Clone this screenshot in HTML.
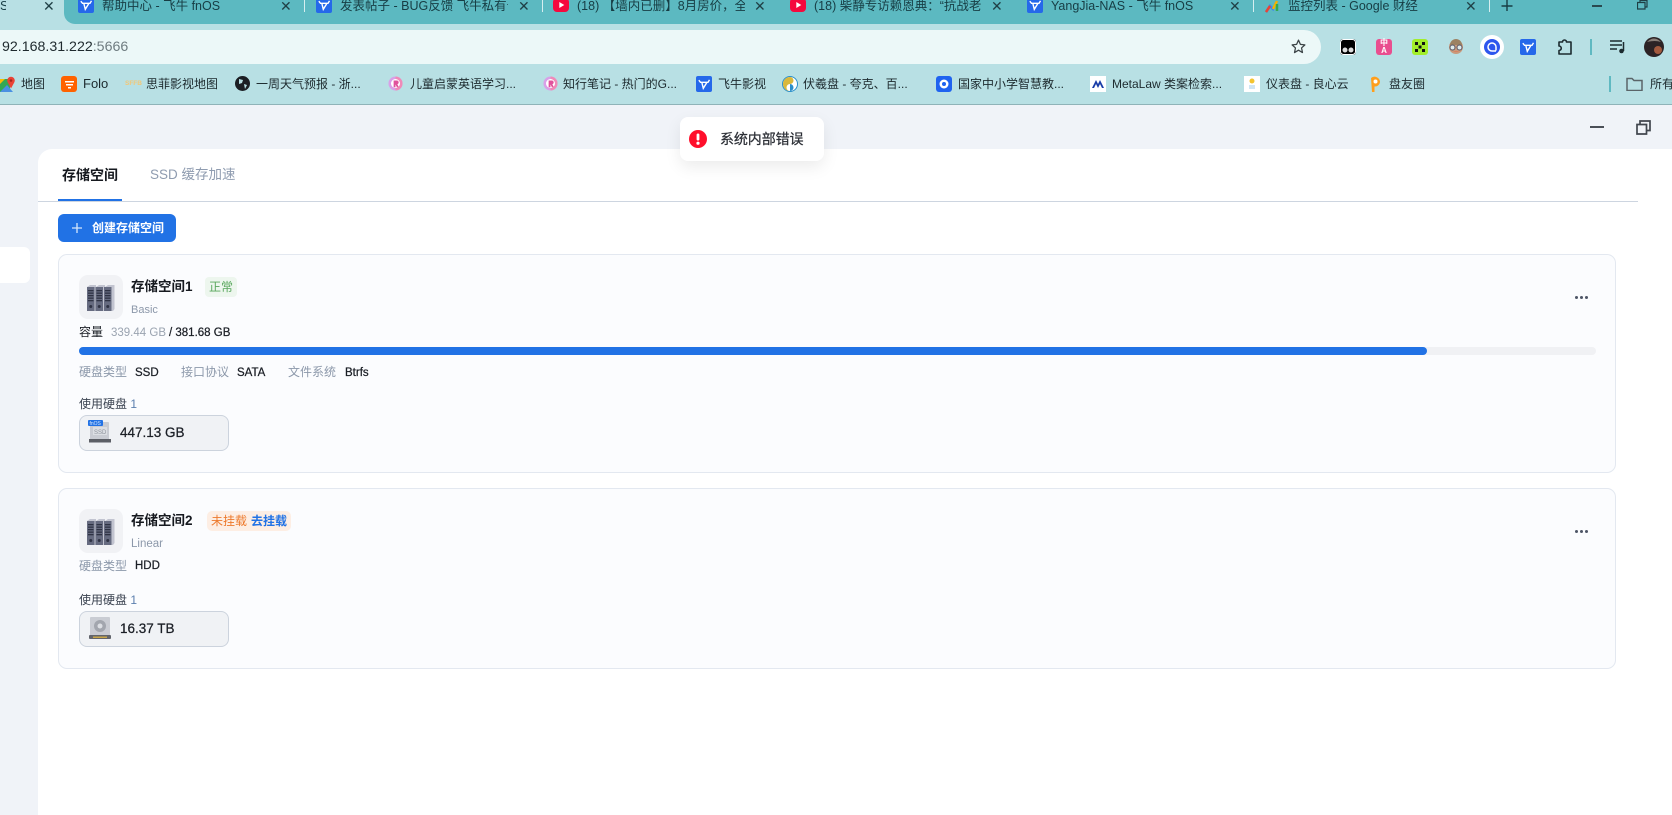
<!DOCTYPE html>
<html lang="zh">
<head>
<meta charset="utf-8">
<title>存储空间</title>
<style>
html,body{margin:0;padding:0;width:1672px;height:815px;overflow:hidden;background:#fff}
body{position:relative;font-family:"Liberation Sans","Noto Sans CJK SC",sans-serif;color:#1b1f26}
.a{position:absolute}
.t{position:absolute;white-space:nowrap;line-height:16px;height:16px}
.tab{font-size:12.5px;color:#173d44;overflow:hidden}
.bm{font-size:12px;color:#1d2a2e}
.x{position:absolute;top:0;font-size:14px;line-height:13px;color:#1f3f45;font-weight:400}
.sep{position:absolute;top:0;width:1px;height:12px;background:#d6eef0}
.g{color:#8c98aa}
.m{-webkit-text-stroke:.25px currentColor}
.card{position:absolute;left:58px;width:1556px;background:#fbfcfe;border:1px solid #e3e8f0;border-radius:9px;box-sizing:content-box}
.srv{position:absolute;left:79px;width:44px;height:44px;background:#f1f2f5;border-radius:9px}
.disk{position:absolute;left:79px;width:148px;height:34px;background:#f0f2f5;border:1px solid #ccd3dd;border-radius:8px}
.s12{font-size:12px}
</style>
</head>
<body>
<svg width="0" height="0" style="position:absolute">
<defs>
<symbol id="fn" viewBox="0 0 16 16"><rect width="16" height="16" rx="2" fill="#2568ea"/><path d="M2.800 4.200L4.500 6.300H12L13.500 3.800M5.800 6.300L7.300 12.300 11 6.300" fill="none" stroke="#fff" stroke-width="1.400"/></symbol>
<symbol id="yt" viewBox="0 0 16 16"><rect width="16" height="14" y="1" rx="4" fill="#f5093e"/><path d="M6.300 5l5 3-5 3z" fill="#fff"/></symbol>
<symbol id="rr" viewBox="0 0 16 16"><circle cx="8" cy="8" r="7.500" fill="#d9a0e8"/><path d="M8 .5a7.500 7.500 0 0 1 0 15z" fill="#f08ab8"/><circle cx="8" cy="8" r="4.800" fill="#fff"/><path d="M6 4.800h3.500a2 2 0 0 1 .5 3.900L11.500 12H9.500L8 9v3H6z" fill="#e0529c"/></symbol>
<symbol id="srv" viewBox="0 0 28 27">
<path d="M0 3L3 1H9L9 3L12 1H18L18 3L21 1H27.500V25L26 27H0z" fill="#c2c4d0"/>
<g fill="#666b80"><rect x="0" y="3" width="7.500" height="24"/><rect x="8.500" y="3" width="7.500" height="24"/><rect x="17" y="3" width="7.500" height="24"/></g>
<g fill="#2f3344"><rect x="1" y="6" width="5.500" height="1.300"/><rect x="1" y="8.500" width="5.500" height="1.300"/><rect x="1" y="11" width="5.500" height="1.300"/><rect x="1" y="13.500" width="5.500" height="1.300"/><rect x="1" y="16" width="5.500" height="1.300"/><rect x="9.500" y="6" width="5.500" height="1.300"/><rect x="9.500" y="8.500" width="5.500" height="1.300"/><rect x="9.500" y="11" width="5.500" height="1.300"/><rect x="9.500" y="13.500" width="5.500" height="1.300"/><rect x="9.500" y="16" width="5.500" height="1.300"/><rect x="18" y="6" width="5.500" height="1.300"/><rect x="18" y="8.500" width="5.500" height="1.300"/><rect x="18" y="11" width="5.500" height="1.300"/><rect x="18" y="13.500" width="5.500" height="1.300"/><rect x="18" y="16" width="5.500" height="1.300"/><circle cx="3.750" cy="22.500" r="1.500"/><circle cx="12.250" cy="22.500" r="1.500"/><circle cx="20.750" cy="22.500" r="1.500"/></g>
</symbol>
</defs>
</svg>

<!-- browser chrome -->
<div class="a" style="left:0;top:0;width:1672px;height:105px;background:#b8e0e4"></div>
<div class="a" style="left:0;top:104px;width:1672px;height:1px;background:#8fb3b8"></div>
<div class="a" style="left:64px;top:0;width:1608px;height:24px;background:#5cb9c1;border-bottom-left-radius:11px"></div>

<div class="t tab" style="left:0;top:-2px;width:6px">S</div>
<div class="x" style="left:43px">✕</div>

<svg class="a" style="left:78px;top:0" width="16" height="13"><use href="#fn" y="-3" width="16" height="16"/></svg>
<div class="t tab" style="left:102px;top:-2px;width:130px">帮助中心 - 飞牛 fnOS</div>
<div class="x" style="left:280px">✕</div>
<div class="sep" style="left:304px"></div>
<svg class="a" style="left:316px;top:0" width="16" height="13"><use href="#fn" y="-3" width="16" height="16"/></svg>
<div class="t tab" style="left:340px;top:-2px;width:168px">发表帖子 - BUG反馈 飞牛私有云</div>
<div class="x" style="left:518px">✕</div>
<div class="sep" style="left:542px"></div>
<svg class="a" style="left:553px;top:0" width="16" height="13"><use href="#yt" y="-3" width="16" height="16"/></svg>
<div class="t tab" style="left:577px;top:-2px;width:168px">(18) 【墙内已删】8月房价，全国</div>
<div class="x" style="left:754px">✕</div>
<svg class="a" style="left:790px;top:0" width="16" height="13"><use href="#yt" y="-3" width="16" height="16"/></svg>
<div class="t tab" style="left:814px;top:-2px;width:168px">(18) 柴静专访赖恩典：“抗战老兵</div>
<div class="x" style="left:991px">✕</div>
<svg class="a" style="left:1027px;top:0" width="16" height="13"><use href="#fn" y="-3" width="16" height="16"/></svg>
<div class="t tab" style="left:1051px;top:-2px;width:170px">YangJia-NAS - 飞牛 fnOS</div>
<div class="x" style="left:1229px">✕</div>
<div class="sep" style="left:1253px"></div>
<svg class="a" style="left:1265px;top:0" width="16" height="13"><path d="M1 12l4-6 3 3 4-8" stroke="#3b82f6" stroke-width="2.500" fill="none"/><path d="M8 9l4-8" stroke="#f4b400" stroke-width="2.500"/><path d="M1 12l4-6" stroke="#ea4335" stroke-width="2.500"/><path d="M12 11V4" stroke="#34a853" stroke-width="2.500"/></svg>
<div class="t tab" style="left:1288px;top:-2px;width:170px">监控列表 - Google 财经</div>
<div class="x" style="left:1465px">✕</div>
<div class="sep" style="left:1489px"></div>
<svg class="a" style="left:1501px;top:0" width="12" height="12"><path d="M6 0v11M0.500 6h11" stroke="#173d44" stroke-width="1.400"/></svg>
<div class="a" style="left:1592px;top:5px;width:10px;height:1.500px;background:#2a4a50"></div>
<svg class="a" style="left:1637px;top:0" width="11" height="10"><path d="M3 2V0.500h7V7H8.500M0.500 2.500h7.500V9H0.500z" stroke="#1f3f45" stroke-width="1.200" fill="none"/></svg>

<!-- address bar -->
<div class="a" style="left:-20px;top:30px;width:1341px;height:34px;background:#ecf8f8;border-radius:17px"></div>
<div class="t" style="left:2px;top:39px;font-size:14.200px;color:#1f2a2e">92.168.31.222<span style="color:#6f7c80">:5666</span></div>
<svg class="a" style="left:1290px;top:38px" width="17" height="17" viewBox="0 0 24 24"><path d="M12 3l2.700 6 6.300.7-4.700 4.300 1.300 6.500L12 17.200 6.400 20.500l1.300-6.500L3 9.700 9.300 9z" fill="none" stroke="#3c4447" stroke-width="1.800" stroke-linejoin="round"/></svg>

<!-- extensions -->
<svg class="a" style="left:1340px;top:39px" width="16" height="16"><rect width="16" height="16" rx="3" fill="#000"/><rect x="0.500" y="0.500" width="15" height="15" rx="3" fill="none" stroke="#fff"/><circle cx="5" cy="11" r="2.500" fill="#ddd"/><circle cx="11" cy="11" r="2.500" fill="#ddd"/></svg>
<div class="a" style="left:1376px;top:39px;width:16px;height:16px;background:#e94e8f;border-radius:3px;color:#fff;font-size:8px;line-height:8px;font-weight:700;text-align:center">中<br>A</div>
<svg class="a" style="left:1412px;top:39px" width="16" height="16"><rect width="16" height="16" rx="3" fill="#a2ee2a"/><g fill="#111"><rect x="3" y="3" width="3" height="3"/><rect x="10" y="3" width="3" height="3"/><rect x="6.500" y="6.500" width="3" height="3"/><rect x="3" y="10" width="3" height="3"/><rect x="10" y="10" width="3" height="3"/></g></svg>
<svg class="a" style="left:1448px;top:39px" width="16" height="16"><circle cx="8" cy="8" r="7" fill="#c99a7c"/><path d="M2 6a6 6 0 0 1 12 0z" fill="#9c8162"/><circle cx="4.500" cy="8.500" r="2.500" fill="#dfeaea" stroke="#556"/><circle cx="11.500" cy="8.500" r="2.500" fill="#dfeaea" stroke="#556"/><path d="M5 13q3-2 6 0" fill="#d97f5e"/></svg>
<div class="a" style="left:1480px;top:35px;width:24px;height:24px;background:#fff;border-radius:50%"></div>
<svg class="a" style="left:1484px;top:39px" width="16" height="16"><circle cx="8" cy="8" r="8" fill="#2d56ee"/><path d="M12 11.500V8a4 4 0 1 0-4 4h4" fill="none" stroke="#fff" stroke-width="1.500"/></svg>
<svg class="a" style="left:1520px;top:39px" width="16" height="16"><use href="#fn"/></svg>
<svg class="a" style="left:1557px;top:38px" width="16" height="18" viewBox="0 0 16 18"><path d="M2 4h3.500a2 2 0 0 1 4 0H14v12H2v-3.500a2 2 0 0 0 0-4.500z" fill="none" stroke="#1c2b2f" stroke-width="1.600" stroke-linejoin="round"/></svg>
<div class="a" style="left:1590px;top:39px;width:2px;height:16px;background:#5fb9c1"></div>
<svg class="a" style="left:1610px;top:40px" width="16" height="14"><path d="M0 1h12M0 5h12M0 9h7" stroke="#1c2b2f" stroke-width="1.500"/><path d="M13.500 2v9" stroke="#1c2b2f" stroke-width="1.500"/><circle cx="11.500" cy="11" r="2.300" fill="#1c2b2f"/></svg>
<svg class="a" style="left:1644px;top:37px" width="20" height="20"><circle cx="10" cy="10" r="10" fill="#2c2325"/><circle cx="14" cy="13" r="4" fill="#a35a3e"/><path d="M3 5q7-7 14 0-6-2-14 0z" fill="#8a7f78"/></svg>

<!-- bookmarks -->
<svg class="a" style="left:0;top:76px" width="15" height="16" viewBox="0 0 15 16"><path d="M0 3h10v13H0z" fill="#34a853"/><path d="M0 16L7 9l6 7z" fill="#4a90e2"/><path d="M0 3h5L0 8z" fill="#fbbc04"/><circle cx="11" cy="4.500" r="3.800" fill="#ea4335"/><path d="M7.800 6.500l3.200 6 3.200-6z" fill="#ea4335"/><circle cx="11" cy="4.500" r="1.300" fill="#a8261c"/></svg>
<div class="t bm" style="left:21px;top:76px">地图</div>
<svg class="a" style="left:61px;top:76px" width="16" height="16"><rect width="16" height="16" rx="3" fill="#ff6200"/><path d="M4 5h9v1.500H4zM5 8h7v1.500H5zM7 11h3v1.500H7z" fill="#fff"/></svg>
<div class="t bm" style="left:83px;top:76px;font-size:13px">Folo</div>
<div class="t" style="left:125px;top:76px;font-size:6.500px;font-weight:700;color:#f2c777">SFFB</div>
<div class="t bm" style="left:146px;top:76px">思菲影视地图</div>
<svg class="a" style="left:235px;top:76px" width="15" height="15"><circle cx="7.500" cy="7.500" r="7.500" fill="#1c1f24"/><path d="M4 3l4 1-1 3-3 1zM9 8l3 1-2 4z" fill="#b8e0e4"/></svg>
<div class="t bm" style="left:256px;top:76px">一周天气预报 - 浙...</div>
<svg class="a" style="left:388px;top:76px" width="15" height="15"><use href="#rr"/></svg>
<div class="t bm" style="left:410px;top:76px">儿童启蒙英语学习...</div>
<svg class="a" style="left:543px;top:76px" width="15" height="15"><use href="#rr"/></svg>
<div class="t bm" style="left:563px;top:76px">知行笔记 - 热门的G...</div>
<svg class="a" style="left:696px;top:76px" width="16" height="16"><use href="#fn"/></svg>
<div class="t bm" style="left:718px;top:76px">飞牛影视</div>
<svg class="a" style="left:782px;top:76px" width="16" height="16"><circle cx="8" cy="8" r="7.500" fill="#fff" stroke="#2b8fc9"/><path d="M8 1a7 7 0 0 0 0 14 3.500 3.500 0 0 1 0-7 3.500 3.500 0 0 0 0-7z" fill="#d9b83c"/><path d="M8 15a3.500 3.500 0 0 0 0-7" fill="#2b8fc9"/></svg>
<div class="t bm" style="left:803px;top:76px">伏羲盘 - 夸克、百...</div>
<svg class="a" style="left:936px;top:76px" width="16" height="16"><rect width="16" height="16" rx="3" fill="#1f63f0"/><circle cx="8" cy="8" r="4.500" fill="#fff"/><circle cx="8" cy="8" r="2" fill="#1f63f0"/></svg>
<div class="t bm" style="left:958px;top:76px">国家中小学智慧教...</div>
<svg class="a" style="left:1090px;top:76px" width="16" height="16"><rect width="16" height="16" fill="#fff"/><path d="M2 12L6 4l2 4 2-4 4 8h-2L10 8l-2 4-2-4-2 4z" fill="#1a3da8"/></svg>
<div class="t bm" style="left:1112px;top:76px">MetaLaw 类案检索...</div>
<svg class="a" style="left:1244px;top:76px" width="16" height="16"><rect width="16" height="16" fill="#fff"/><circle cx="8" cy="5" r="2.500" fill="#f4c430"/><rect x="5" y="9" width="6" height="4" fill="#cfe5f4"/></svg>
<div class="t bm" style="left:1266px;top:76px">仪表盘 - 良心云</div>
<svg class="a" style="left:1369px;top:75px" width="13" height="18"><path d="M2 3a5.500 5.500 0 0 1 9 3.500 5 5 0 0 1-5.500 5V17H3z" fill="#ff9f1c"/><circle cx="6.500" cy="6.500" r="2" fill="#fff"/></svg>
<div class="t bm" style="left:1389px;top:76px">盘友圈</div>
<div class="a" style="left:1609px;top:76px;width:2px;height:16px;background:#5fb9c1"></div>
<svg class="a" style="left:1626px;top:77px" width="17" height="14"><path d="M1 1.500h5l2 2h8v10H1z" fill="none" stroke="#5a6468" stroke-width="1.500"/></svg>
<div class="t bm" style="left:1650px;top:76px">所有</div>

<!-- app background -->
<div class="a" style="left:0;top:105px;width:1672px;height:710px;background:#f0f3f8"></div>
<div class="a" style="left:38px;top:149px;width:1634px;height:666px;background:#fff;border-top-left-radius:14px"></div>
<div class="a" style="left:-8px;top:247px;width:38px;height:36px;background:#fff;border-radius:6px"></div>

<!-- window controls -->
<div class="a" style="left:1590px;top:126px;width:14px;height:2px;background:#4a4f57"></div>
<svg class="a" style="left:1636px;top:120px" width="15" height="15"><path d="M4 4V1h10v9.500h-3M1 4.500h9.500V14H1z" fill="none" stroke="#41464e" stroke-width="1.700"/></svg>

<!-- tabs -->
<div class="t" style="left:62px;top:167px;font-size:14px;font-weight:700;color:#16191f">存储空间</div>
<div class="t" style="left:150px;top:167px;font-size:13.500px;color:#8f9cb0">SSD 缓存加速</div>
<div class="a" style="left:38px;top:201px;width:1600px;height:1px;background:#cdd5e0"></div>
<div class="a" style="left:58px;top:199px;width:64px;height:2px;background:#2172e5"></div>

<!-- create button -->
<div class="a" style="left:58px;top:214px;width:118px;height:28px;background:#2172e5;border-radius:6px"></div>
<svg class="a" style="left:72px;top:223px" width="10" height="10"><path d="M5 0v10M0 5h10" stroke="#d6e6fb" stroke-width="1.300"/></svg>
<div class="t" style="left:92px;top:220px;font-size:12px;font-weight:700;color:#fff">创建存储空间</div>

<!-- card 1 -->
<div class="card" style="top:254px;height:217px"></div>
<div class="srv" style="top:275px"></div>
<svg class="a" style="left:87px;top:284px" width="28" height="27"><use href="#srv"/></svg>
<div class="t" style="left:131px;top:279px;font-size:13.500px;font-weight:700;color:#16191f">存储空间1</div>
<div class="a" style="left:205px;top:277px;width:32px;height:20px;background:#edf6ee;border-radius:4px"></div>
<div class="t" style="left:209px;top:279px;font-size:12px;color:#5aa85e">正常</div>
<div class="t g" style="left:131px;top:302px;font-size:11px">Basic</div>
<div class="t s12" style="left:79px;top:324px">容量</div>
<div class="t s12" style="left:111px;top:325px;font-size:11.500px;color:#9aa3b0">339.44 GB</div>
<div class="t s12 m" style="left:169px;top:325px;font-size:11.500px">/ 381.68 GB</div>
<div class="a" style="left:79px;top:347px;width:1517px;height:8px;background:#f0f1f4;border-radius:4px"></div>
<div class="a" style="left:79px;top:347px;width:1348px;height:8px;background:#2172e5;border-radius:4px"></div>
<div class="t s12 g" style="left:79px;top:364px">硬盘类型</div>
<div class="t s12 m" style="left:135px;top:365px;font-size:11.500px">SSD</div>
<div class="t s12 g" style="left:181px;top:364px">接口协议</div>
<div class="t s12 m" style="left:237px;top:365px;font-size:11.500px">SATA</div>
<div class="t s12 g" style="left:288px;top:364px">文件系统</div>
<div class="t s12 m" style="left:345px;top:365px;font-size:11.500px">Btrfs</div>
<div class="t s12" style="left:79px;top:396px;color:#3a4250">使用硬盘 <span style="color:#5b7fae">1</span></div>
<div class="disk" style="top:415px"></div>
<svg class="a" style="left:88px;top:420px" width="24" height="24"><rect x="2" y="2" width="19" height="20" rx="1" fill="#c9ccd3"/><rect x="5" y="7" width="14" height="8" fill="#dcdfe4"/><text x="6" y="14" font-size="6" font-family="Liberation Sans" fill="#8d929b">SSD</text><rect x="1" y="19" width="22" height="3.500" fill="#5c5f66"/><rect x="0" y="0" width="15" height="6" rx="1" fill="#2172e5"/><text x="1.500" y="5" font-size="5" font-family="Liberation Sans" fill="#d6e6fb">fnOS</text></svg>
<div class="t m" style="left:120px;top:425px;font-size:13.500px">447.13 GB</div>
<div class="a" style="left:1575px;top:296px;width:3px;height:3px;background:#4d5566;border-radius:50%;box-shadow:5px 0 0 #4d5566,10px 0 0 #4d5566"></div>

<!-- card 2 -->
<div class="card" style="top:488px;height:179px"></div>
<div class="srv" style="top:509px"></div>
<svg class="a" style="left:87px;top:518px" width="28" height="27"><use href="#srv"/></svg>
<div class="t" style="left:131px;top:513px;font-size:13.500px;font-weight:700;color:#16191f">存储空间2</div>
<div class="a" style="left:207px;top:511px;width:84px;height:20px;background:#fdeee4;border-radius:5px"></div>
<div class="t" style="left:211px;top:513px;font-size:12px;color:#ed7a2d">未挂载</div>
<div class="t" style="left:251px;top:513px;font-size:12px;font-weight:700;color:#2172e5">去挂载</div>
<div class="t g" style="left:131px;top:536px;font-size:11.500px">Linear</div>
<div class="t s12 g" style="left:79px;top:558px">硬盘类型</div>
<div class="t s12 m" style="left:135px;top:558px;font-size:11.500px">HDD</div>
<div class="t s12" style="left:79px;top:592px;color:#3a4250">使用硬盘 <span style="color:#5b7fae">1</span></div>
<div class="disk" style="top:611px"></div>
<svg class="a" style="left:88px;top:617px" width="24" height="24"><rect x="2" y="0" width="20" height="20" rx="1" fill="#c9ccd3"/><circle cx="12" cy="9" r="6" fill="#a2a6ae"/><circle cx="12" cy="9" r="2.500" fill="#dcdfe4"/><rect x="1" y="18" width="22" height="4" rx="1" fill="#62656c"/><rect x="5" y="19.500" width="14" height="1.500" fill="#c9a74a"/></svg>
<div class="t m" style="left:120px;top:621px;font-size:13.500px">16.37 TB</div>
<div class="a" style="left:1575px;top:530px;width:3px;height:3px;background:#4d5566;border-radius:50%;box-shadow:5px 0 0 #4d5566,10px 0 0 #4d5566"></div>

<!-- toast -->
<div class="a" style="left:680px;top:117px;width:144px;height:44px;background:#fff;border-radius:8px;box-shadow:0 6px 16px rgba(0,0,0,.08)"></div>
<svg class="a" style="left:689px;top:130px" width="18" height="18"><circle cx="9" cy="9" r="9" fill="#ff0f2b"/><rect x="7.600" y="3.500" width="2.800" height="7" rx="1.400" fill="#fff"/><circle cx="9" cy="13.200" r="1.600" fill="#fff"/></svg>
<div class="t m" style="left:720px;top:131px;font-size:14px;color:#2c2f36;letter-spacing:-.1px">系统内部错误</div>
</body>
</html>
